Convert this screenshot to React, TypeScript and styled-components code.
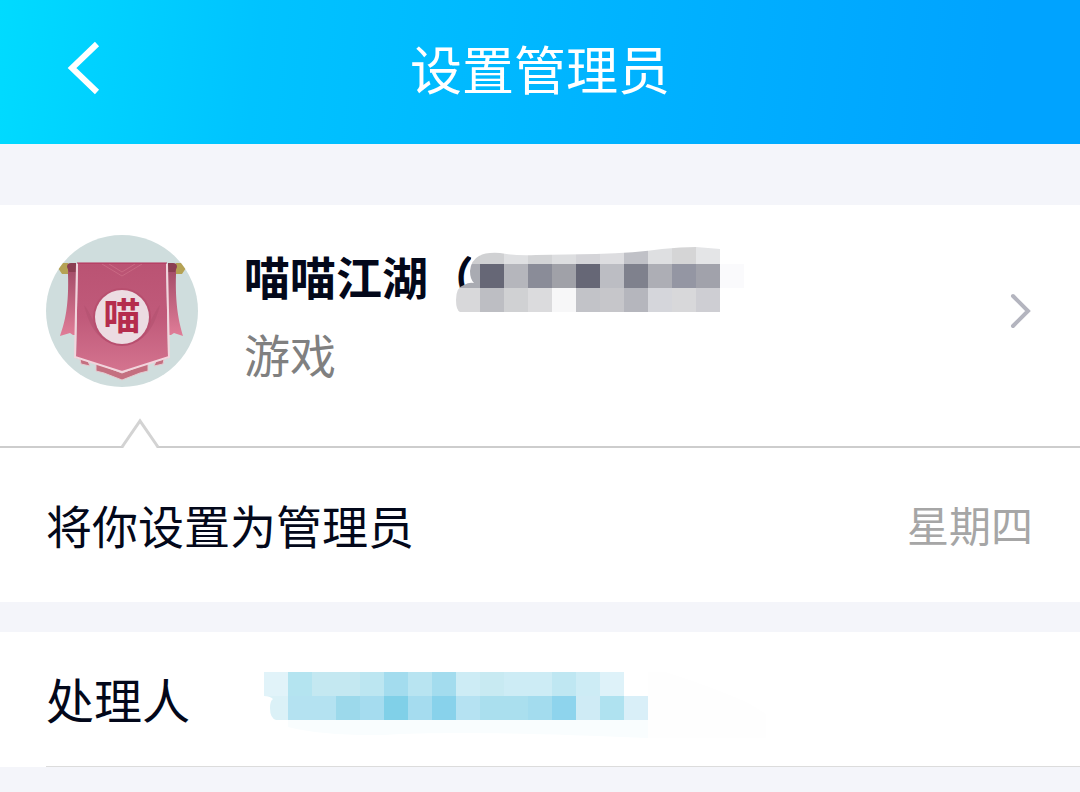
import React from "react";
import styled, { createGlobalStyle } from "styled-components";

const GlobalStyle = createGlobalStyle`
  *, *::before, *::after { box-sizing: border-box; }
  body {
    margin: 0;
    background: #f4f5fa;
    color: #03081a;
    font-family: "Noto Sans CJK SC", sans-serif;
  }
`;

const Header = styled.header`
  display: grid;
  grid-template-columns: 96px 1fr 96px;
  align-items: center;
  height: 144px;
  padding: 0 36px 8px;
  background: linear-gradient(96deg, #00dbff 0%, #00c3ff 24%, #00b4ff 55%, #00a3ff 92%);
`;

const BackButton = styled.button`
  display: flex;
  align-items: center;
  justify-content: center;
  height: 96px;
  padding: 0;
  border: 0;
  background: none;
  cursor: pointer;
`;

const Title = styled.h1`
  margin: 0;
  color: #fff;
  font-size: 52px;
  font-weight: 400;
  line-height: 76px;
  text-align: center;
`;

const Main = styled.main`
  padding-top: 61px;
`;

const GroupCard = styled.a`
  position: relative;
  display: flex;
  align-items: flex-start;
  gap: 46px;
  height: 243px;
  padding: 30px 47px 0 46px;
  border-bottom: 2px solid #cdcdcd;
  background: #fff;
  color: inherit;
  text-decoration: none;
`;

const GroupText = styled.div`
  flex: 1;
  padding-top: 5px;
`;

const NameLine = styled.div`
  display: flex;
  align-items: flex-start;
  height: 70px;
  font-size: 46px;
  font-weight: 700;
  line-height: 70px;
  white-space: nowrap;
`;

const Category = styled.div`
  margin-top: 8px;
  color: #808080;
  font-size: 46px;
  line-height: 70px;
`;

const CardArrow = styled.svg`
  flex: none;
  align-self: flex-start;
  margin-top: 55px;
`;

const Pointer = styled.svg`
  position: absolute;
  left: 120px;
  bottom: -2px;
`;

const Row = styled.section`
  display: flex;
  align-items: center;
  height: ${(p: { $height: number }) => p.$height}px;
  padding: 0 47px 3px 46px;
  background: #fff;
`;

const Message = styled.p`
  flex: 1;
  margin: 0;
  font-size: 46px;
  line-height: 70px;
`;

const Day = styled.time`
  color: #a6a6a6;
  font-size: 42px;
  line-height: 64px;
`;

const HandlerRow = styled(Row)`
  position: relative;
  gap: 74px;
  margin-top: 30px;

  &::after {
    content: "";
    position: absolute;
    left: 46px;
    right: 0;
    bottom: 0;
    height: 1px;
    background: #dcdcdc;
  }
`;

const HandlerLabel = styled.span`
  font-size: 48px;
  line-height: 70px;
`;

const NumberMosaic = styled.svg`
  flex: none;
  margin-left: -18px;
`;

const CELL = 24;

const numberCells = [
  ["#cdced0", "#d0d1d3", "#dfe0e2", "#d3d4d6", "#dddee0", "#d4d4d8", "#dddde0", "#c0c1c7", "#dedfe1", "#d5d5d6", "#e4e5e7"],
  ["#a9abb2", "#666776", "#b5b6bc", "#8a8c98", "#a0a1a8", "#666776", "#bcbdc3", "#7f818d", "#adaeb5", "#9496a3", "#a1a2ab"],
  ["#d8d8da", "#bdbec3", "#d0d1d3", "#dbdbdd", "#f7f7f8", "#c2c3c8", "#c6c6ca", "#b5b6bd", "#d5d6db", "#d8d8da", "#ceced3"],
];

const handlerCells = [
  ["#e1f3f9", "#b4e4f0", "#c4e8f1", "#c4e8f1", "#bce6f1", "#a3dcee", "#b8e4f1", "#a3dcee", "#cdecf5", "#c8eaf2", "#cdecf5", "#cdecf5", "#bfe7f2", "#cdecf5", "#def2f9"],
  ["#dbf1f7", "#b4e2f1", "#b4e2f1", "#9cd9eb", "#a5dcef", "#80d0e8", "#a5dcef", "#88d2eb", "#b5e2f2", "#aadfee", "#aadfee", "#a3dcee", "#8ed4ed", "#cfebf5", "#afe2f0", "#d9eff8"],
];

function Cells({ rows }: { rows: string[][] }) {
  return (
    <>
      {rows.map((row, y) =>
        row.map((fill, x) => (
          <rect key={`${x}-${y}`} x={x * CELL} y={y * CELL} width={CELL} height={CELL} fill={fill} />
        )),
      )}
    </>
  );
}

function Avatar() {
  return (
    <svg width="152" height="152" viewBox="0 0 152 152" role="img" aria-label="喵喵江湖">
      <defs>
        <clipPath id="avatar"><circle cx="76" cy="76" r="76" /></clipPath>
        <linearGradient id="cloth" x1="0" y1="0" x2="0" y2="1">
          <stop offset="0" stopColor="#ba5373" />
          <stop offset=".5" stopColor="#c05a7a" />
          <stop offset="1" stopColor="#d4748f" />
        </linearGradient>
        <linearGradient id="ribbon" x1="0" y1="0" x2="0" y2="1">
          <stop offset="0" stopColor="#9f4864" />
          <stop offset="1" stopColor="#e07d98" />
        </linearGradient>
      </defs>
      <g clipPath="url(#avatar)">
        <rect width="152" height="152" fill="#cfdddd" />
        <path d="M13 28h9l3 5-3 6h-6l-4-6zM139 28h-9l-3 5 3 6h6l4-6z" fill="#b5a254" />
        <path d="M22 29h8v71h-3l-3-2-10 3c5-14 9-31 8-62zM130 29h-8v71h3l3-2 9 3c-4-14-8-31-7-62z" fill="url(#ribbon)" />
        <path d="M21 32q0-4 4-4h5v9h-7zM131 32q0-4-4-4h-5v9h7z" fill="#8b3e52" />
        <path d="M34 124l8 2 2 5-9-2zM118 124l-8 2-2 5 9-2zM50 128l26 10 26-10v8l-8 2-18 7-18-7-8-2z" fill="#c46f80" stroke="#e5c9cf" strokeWidth="1" />
        <path d="M32 28h88l2 95-46 14-46-14z" fill="url(#cloth)" />
        <path d="M56 29l20 12 20-12M63 29l13 8 13-8" fill="none" stroke="#c96883" strokeWidth="1" />
        <path d="M38 70c5 20 14 39 38 40 24-1 33-20 38-40-10 11-9 30-38 34-29-4-28-23-38-34z" fill="#b35270" opacity=".6" />
        <path d="M31 29l-2 93 47 15 47-15-2-93" fill="none" stroke="#f2d5dd" strokeWidth="2" />
        <path d="M31 28h90" stroke="#b32e58" strokeWidth="1" />
        <circle cx="76" cy="82" r="29" fill="#b84f6f" />
        <circle cx="76" cy="82" r="27" fill="#ecdce2" />
        <text x="76" y="95" textAnchor="middle" fontSize="37" fontWeight="700" fill="#b52d4d">喵</text>
      </g>
    </svg>
  );
}

export default function App() {
  return (
    <>
      <GlobalStyle />
      <Header>
        <BackButton type="button" aria-label="返回">
          <svg width="40" height="56" viewBox="0 0 40 56" fill="none" stroke="#fff" strokeWidth="6">
            <path d="M33 4L8 28l25 24" />
          </svg>
        </BackButton>
        <Title>设置管理员</Title>
      </Header>
      <Main>
        <GroupCard href="#group">
          <Avatar />
          <GroupText>
            <NameLine>
              <span>喵喵江湖（</span>
              <NumberMosaic width="312" height="72" viewBox="0 0 312 72" aria-hidden="true">
                <defs>
                  <clipPath id="number">
                    <path d="M4 72Q0 70 0 60Q0 47 8 45Q13 42 18 43Q14 39 14 31Q15 20 23 16Q30 12 44 13Q60 16 80 15L140 14Q180 13 206 9Q225 7 240 7L264 9V72z" />
                  </clipPath>
                </defs>
                <path d="M14 31Q15 20 23 16L16 14L10 44L18 43Q14 39 14 31z" fill="#fff" />
                <path d="M264 24h24v24h-24z" fill="#fafafc" />
                <g clipPath="url(#number)" shapeRendering="crispEdges"><Cells rows={numberCells} /></g>
              </NumberMosaic>
            </NameLine>
            <Category>游戏</Category>
          </GroupText>
          <CardArrow width="24" height="40" viewBox="0 0 24 40" fill="none" stroke="#b4b5bf" strokeWidth="4" strokeLinecap="round" aria-hidden="true">
            <path d="M4 6l15 15L4 36" />
          </CardArrow>
          <Pointer width="40" height="30" viewBox="0 0 40 30" aria-hidden="true">
            <path d="M3 30L20 4l17 26z" fill="#fff" />
            <path d="M2 29L20 3l18 26" fill="none" stroke="#d3d3d3" strokeWidth="3" />
          </Pointer>
        </GroupCard>
        <Row $height={154}>
          <Message>将你设置为管理员</Message>
          <Day>星期四</Day>
        </Row>
        <HandlerRow $height={135}>
          <HandlerLabel>处理人</HandlerLabel>
          <svg width="504" height="80" viewBox="0 0 504 80" aria-hidden="true">
            <defs>
              <clipPath id="handler">
                <path d="M0 0H384V48H12Q6 46 6 36Q6 29 9 27Q6 24 0 24z" />
              </clipPath>
            </defs>
            <g transform="translate(0 14)">
              <path d="M24 48H384V66Q200 58 120 63Q60 64 24 55z" fill="#f9fdfe" />
              <path d="M384 0h18q60 20 84 32l16 10v24H384z" fill="#fefefe" />
              <g clipPath="url(#handler)" shapeRendering="crispEdges"><Cells rows={handlerCells} /></g>
            </g>
          </svg>
        </HandlerRow>
      </Main>
    </>
  );
}
